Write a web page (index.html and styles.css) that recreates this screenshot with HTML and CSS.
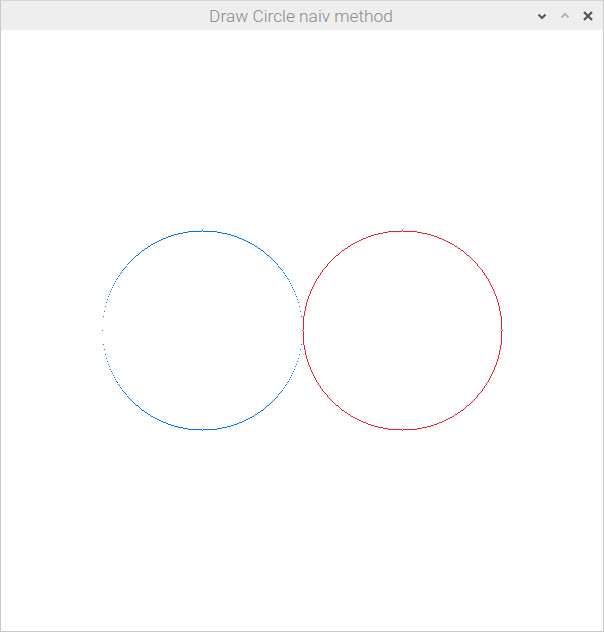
FILE: index.html
```html
<!DOCTYPE html>
<html>
<head>
<meta charset="utf-8">
<title>Draw Circle naiv method</title>
<link rel="stylesheet" href="styles.css">
</head>
<body>
<div class="window">
  <div class="titlebar">
    <span class="title">Draw Circle naiv method</span>
    <div class="controls">
      <svg class="btn" width="12" height="12" viewBox="0 0 12 12"><path d="M2.5 4.5 L6 8 L9.5 4.5" fill="none" stroke="#555" stroke-width="2"/></svg>
      <svg class="btn up" width="12" height="12" viewBox="0 0 12 12"><path d="M2.5 7.5 L6 4 L9.5 7.5" fill="none" stroke="#b4b4b4" stroke-width="2"/></svg>
      <svg class="btn" width="12" height="12" viewBox="0 0 12 12"><path d="M2 2 L10 10 M10 2 L2 10" fill="none" stroke="#555" stroke-width="2.2"/></svg>
    </div>
  </div>
  <div class="content">
    <canvas id="cv" width="602" height="601"></canvas>
  </div>
</div>
<script src="script.js"></script>
</body>
</html>
```
FILE: styles.css
```css
html, body {
  margin: 0;
  padding: 0;
  background: #ffffff;
}
.window {
  width: 604px;
  height: 632px;
  box-sizing: border-box;
  display: flex;
  flex-direction: column;
  border: 1px solid #c9c9c9;
  border-top-color: #d4d4d4;
}
.titlebar {
  height: 29px;
  flex: 0 0 29px;
  background: #eeeeee;
  position: relative;
  display: flex;
  align-items: center;
  justify-content: center;
}
.title {
  font-family: Roboto, "Liberation Sans", sans-serif;
  font-weight: 300;
  font-size: 17.3px;
  color: #8a8a8a;
  letter-spacing: 0;
  margin-left: -2px;
}
.controls {
  position: absolute;
  right: 9px;
  top: 9px;
  display: flex;
  gap: 11px;
}
.btn {
  display: block;
}
.content {
  flex: 1;
  background: #ffffff;
  display: flex;
}
canvas {
  display: block;
}
```
FILE: script.js
```js
(function () {
  var cv = document.getElementById('cv');
  var ctx = cv.getContext('2d');
  var rect = cv.getBoundingClientRect();
  var ox = Math.round(rect.left), oy = Math.round(rect.top);
  function px(x, y) { ctx.fillRect(x - ox, y - oy, 1, 1); }
  var r = 100;
  // blue: naive, iterate x only
  ctx.fillStyle = 'rgb(0,120,230)';
  var cx = 202, cy = 330;
  for (var x = -r; x <= r; x++) {
    var y = Math.floor(Math.sqrt(r * r - x * x));
    px(cx + x, cy + y);
    px(cx + x, cy - y);
  }
  // red: iterate x and y
  ctx.fillStyle = 'rgb(232,30,52)';
  cx = 402; cy = 330;
  for (var x2 = -r; x2 <= r; x2++) {
    var y2 = Math.floor(Math.sqrt(r * r - x2 * x2));
    px(cx + x2, cy + y2);
    px(cx + x2, cy - y2);
  }
  for (var y3 = -r; y3 <= r; y3++) {
    var x3 = Math.floor(Math.sqrt(r * r - y3 * y3));
    px(cx + x3, cy + y3);
    px(cx - x3, cy + y3);
  }
})();
```
